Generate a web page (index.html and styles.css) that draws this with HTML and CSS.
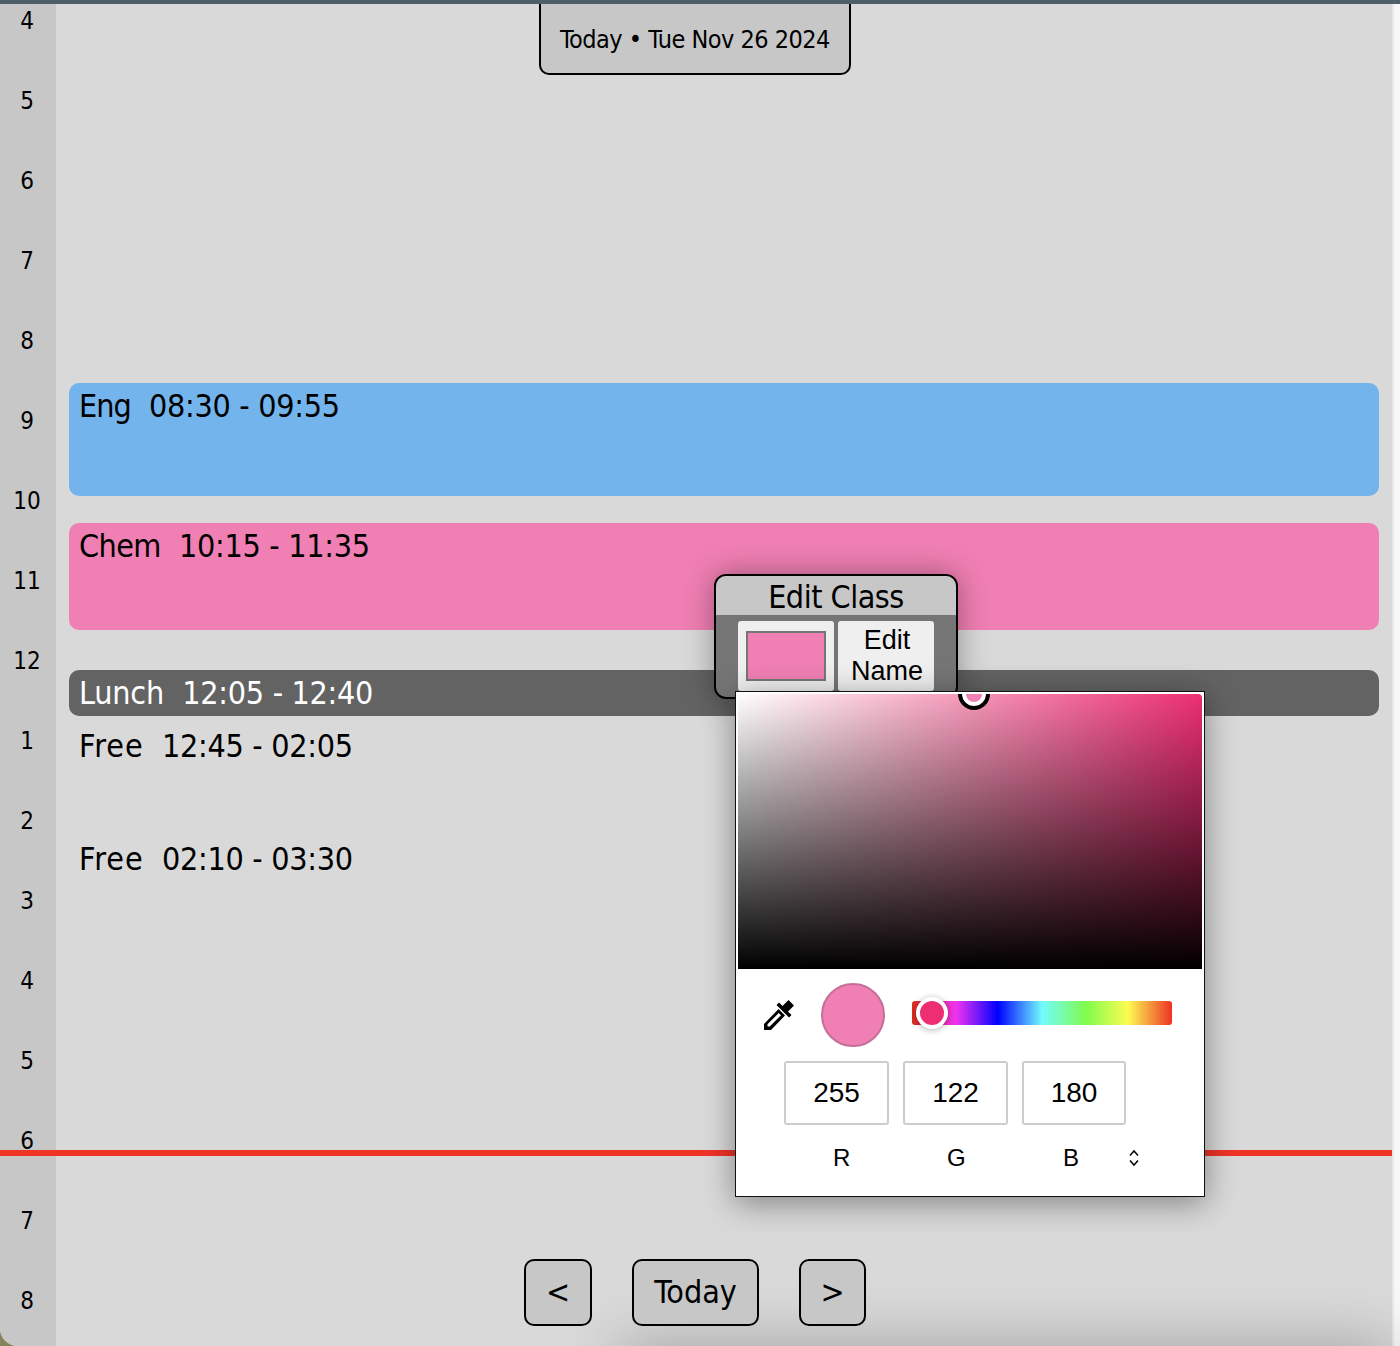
FILE: index.html
```html
<!DOCTYPE html>
<html lang="en">
<head>
    <meta charset="UTF-8">
    <title>Schedule</title>
    <link rel="stylesheet" href="styles.css">
</head>
<body>
    <div class="window">
        <div class="calendar">
            <div class="hours">
                <div class="hour">4</div>
                <div class="hour">5</div>
                <div class="hour">6</div>
                <div class="hour">7</div>
                <div class="hour">8</div>
                <div class="hour">9</div>
                <div class="hour">10</div>
                <div class="hour">11</div>
                <div class="hour">12</div>
                <div class="hour">1</div>
                <div class="hour">2</div>
                <div class="hour">3</div>
                <div class="hour">4</div>
                <div class="hour">5</div>
                <div class="hour">6</div>
                <div class="hour">7</div>
                <div class="hour">8</div>
            </div>
            <div class="day">
                <div class="event eng"><span class="name">Eng</span>  <span class="time">08:30 - 09:55</span></div>
                <div class="event chem"><span class="name">Chem</span>  <span class="time">10:15 - 11:35</span></div>
                <div class="event lunch"><span class="name">Lunch</span>  <span class="time">12:05 - 12:40</span></div>
                <div class="event free free-one"><span class="name">Free</span>  <span class="time">12:45 - 02:05</span></div>
                <div class="event free free-two"><span class="name">Free</span>  <span class="time">02:10 - 03:30</span></div>
            </div>
            <div class="scrollbar"></div>
        </div>

        <div class="bottom-shade"></div>
        <div class="now-line"></div>
        <div class="date-pill">Today • Tue Nov 26 2024</div>

        <div class="nav">
            <button class="nav-btn arrow">&lt;</button>
            <button class="nav-btn today">Today</button>
            <button class="nav-btn arrow">&gt;</button>
        </div>

        <div class="edit-popup">
            <div class="edit-title">Edit Class</div>
            <div class="edit-body">
                <button class="edit-btn"><span class="swatch"></span></button>
                <button class="edit-btn">Edit Name</button>
            </div>
        </div>

        <div class="picker">
            <div class="picker-area">
                <div class="area-marker"></div>
            </div>
            <div class="picker-controls">
                <svg class="dropper" viewBox="0 0 30 30" width="30" height="30">
                    <path d="M24.500 0 L30 5.500 L24 11.500 L27.500 15 L25 17.500 L12.500 5 L15 2.500 L18.500 6 Z" fill="#000"/>
                    <path d="M14.500 9 L21 15.500 L7 30 L0 30 L0 24 Z M14.800 13 L3.500 24.300 L3.500 26.500 L5.700 26.500 L17 15.200 Z" fill="#000" fill-rule="evenodd"/>
                </svg>
                <div class="preview"></div>
                <div class="hue-bar">
                    <div class="hue-thumb"></div>
                </div>
            </div>
            <div class="rgb-inputs">
                <div class="rgb-box">255</div>
                <div class="rgb-box">122</div>
                <div class="rgb-box rgb-last">180</div>
            </div>
            <div class="rgb-labels">
                <span class="rgb-label r">R</span>
                <span class="rgb-label g">G</span>
                <span class="rgb-label b">B</span>
                <svg class="mode-toggle" viewBox="0 0 12 18" width="12" height="18">
                    <path d="M2 6.500 L6 2 L10 6.500 M2 11.500 L6 16 L10 11.500" fill="none" stroke="#000" stroke-width="1.500"/>
                </svg>
            </div>
        </div>
    </div>
</body>
</html>
```

FILE: styles.css
```css
body {
    margin: 0;
    background: #85855a;
    font-family: "DejaVu Sans Condensed", "DejaVu Sans", sans-serif;
    color: #000;
}

.window {
    position: relative;
    width: 1400px;
    height: 1346px;
    overflow: hidden;
}

.calendar {
    display: flex;
    height: 1342px;
    border-top: 4px solid #4f5f6a;
    border-bottom-left-radius: 18px;
    overflow: hidden;
    background: #d9d9d9;
}

.hours {
    width: 56px;
    flex-shrink: 0;
    display: flex;
    flex-direction: column;
    gap: 48px;
    padding-top: 1px;
    background: #c7c7c7;
    overflow: hidden;
}

.hour {
    height: 32px;
    flex-shrink: 0;
    line-height: 32px;
    font-size: 24px;
    text-align: center;
    padding-right: 2px;
}

.day {
    flex: 1;
    display: flex;
    flex-direction: column;
    padding: 379px 13px 0;
}

.event {
    padding-left: 10px;
    border-radius: 10px;
    font-size: 32px;
    line-height: 46px;
    white-space: pre;
}

.time {
    letter-spacing: -0.3px;
}

.eng {
    height: 113px;
    background: #73b4ed;
}

.eng .name {
    letter-spacing: -1px;
}

.chem {
    height: 107px;
    margin-top: 27px;
    background: #f07fb3;
}

.chem .name {
    letter-spacing: -0.6px;
}

.lunch {
    height: 46px;
    margin-top: 40px;
    background: #636363;
    color: #fff;
}

.lunch .name {
    letter-spacing: -0.2px;
}

.free {
    height: 107px;
}

.free .name {
    letter-spacing: 1px;
}

.free-one {
    margin-top: 7px;
}

.free-two {
    margin-top: 6px;
}

.scrollbar {
    width: 8px;
    flex-shrink: 0;
    background: #f7f7f7;
    border-left: 2px solid #e8e8e8;
    box-sizing: border-box;
}

.bottom-shade {
    position: absolute;
    left: 620px;
    right: 8px;
    bottom: -50px;
    height: 50px;
    box-shadow: 0 0 60px rgba(0, 0, 0, 0.28);
}

.now-line {
    position: absolute;
    left: 0;
    top: 1150px;
    width: 1392px;
    height: 6px;
    background: #ef3426;
}

.date-pill {
    position: absolute;
    left: 539px;
    top: 4px;
    width: 312px;
    height: 71px;
    box-sizing: border-box;
    border: 2px solid #000;
    border-top: none;
    border-radius: 0 0 10px 10px;
    background: #c7c7c7;
    font-size: 25px;
    letter-spacing: -0.5px;
    line-height: 72px;
    text-align: center;
}

.nav {
    position: absolute;
    left: 524px;
    top: 1259px;
    display: flex;
    gap: 40px;
}

.nav-btn {
    height: 67px;
    padding: 0 0 2px;
    border: 2px solid #000;
    border-radius: 10px;
    background: #c7c7c7;
    font-family: inherit;
    font-size: 32px;
    color: #000;
}

.arrow {
    width: 68px;
}

.arrow:last-child {
    width: 67px;
}

.today {
    width: 127px;
}

.edit-popup {
    position: absolute;
    left: 714px;
    top: 574px;
    width: 244px;
    height: 125px;
    box-sizing: border-box;
    border: 2px solid #000;
    border-radius: 12px;
    overflow: hidden;
    background: #757575;
    box-shadow: 0 0 30px rgba(0, 0, 0, 0.35);
}

.edit-title {
    height: 39px;
    line-height: 43px;
    background: #c7c7c7;
    font-size: 32px;
    letter-spacing: -0.5px;
    text-align: center;
}

.edit-body {
    display: flex;
    gap: 4px;
    padding: 6px 0 0 22px;
}

.edit-btn {
    width: 96px;
    height: 70px;
    padding: 0 0 0 2px;
    border: none;
    border-radius: 3px;
    background: #efefef;
    font-family: "Liberation Sans", Arial, sans-serif;
    font-size: 27px;
    line-height: 31px;
    color: #000;
}

.edit-btn:first-child {
    padding: 0;
}

.swatch {
    display: block;
    width: 80px;
    height: 50px;
    margin: 0 auto;
    box-sizing: border-box;
    border: 2px solid #767676;
    background: #f07fb3;
}

.picker {
    position: absolute;
    left: 735px;
    top: 691px;
    width: 470px;
    height: 506px;
    box-sizing: border-box;
    padding: 2px 2px 1px;
    border: 1px solid #111;
    background: #fff;
    font-family: "Liberation Sans", Arial, sans-serif;
    box-shadow: 0 6px 30px rgba(0, 0, 0, 0.4);
}

.picker-area {
    position: relative;
    height: 275px;
    overflow: hidden;
    border-top-right-radius: 4px;
    background: linear-gradient(to top, #000, rgba(0, 0, 0, 0)), linear-gradient(to right, #fff, #ed2f72);
}

.area-marker {
    position: absolute;
    left: 220px;
    top: -16px;
    width: 32px;
    height: 32px;
    box-sizing: border-box;
    border: 4px solid #000;
    border-radius: 50%;
    background: #f07fb3;
    box-shadow: inset 0 0 0 4px #fff;
}

.picker-controls {
    display: flex;
    align-items: center;
    height: 92px;
}

.dropper {
    margin-left: 26px;
    margin-top: -1px;
}

.preview {
    width: 64px;
    height: 64px;
    box-sizing: border-box;
    margin-left: 27px;
    border: 2px solid #c56f98;
    border-radius: 50%;
    background: #f07fb3;
}

.hue-bar {
    position: relative;
    width: 260px;
    height: 24px;
    margin-left: 27px;
    margin-top: -4px;
    border-radius: 3px;
    background: linear-gradient(to right, #dd2d1a 0%, #ef33ef 17%, #0000ff 33%, #72fbfd 50%, #80fb4d 67%, #fcfc52 83%, #ee3324 100%);
}

.hue-thumb {
    position: absolute;
    left: 4px;
    top: -4px;
    width: 32px;
    height: 32px;
    box-sizing: border-box;
    border: 4px solid #fff;
    border-radius: 50%;
    background: #ed2f72;
    box-shadow: 0 1px 6px rgba(0, 0, 0, 0.3);
}

.rgb-inputs {
    display: flex;
    gap: 14px;
    padding-left: 46px;
}

.rgb-box {
    width: 105px;
    height: 64px;
    box-sizing: border-box;
    border: 2px solid #ccc;
    border-radius: 3px;
    font-size: 28px;
    line-height: 59px;
    text-align: center;
}

.rgb-last {
    width: 104px;
}

.rgb-labels {
    position: relative;
    height: 66px;
    font-size: 24px;
}

.rgb-label {
    position: absolute;
    top: 19px;
}

.r {
    left: 95px;
}

.g {
    left: 209px;
}

.b {
    left: 325px;
}

.mode-toggle {
    position: absolute;
    left: 390px;
    top: 24px;
}
```
